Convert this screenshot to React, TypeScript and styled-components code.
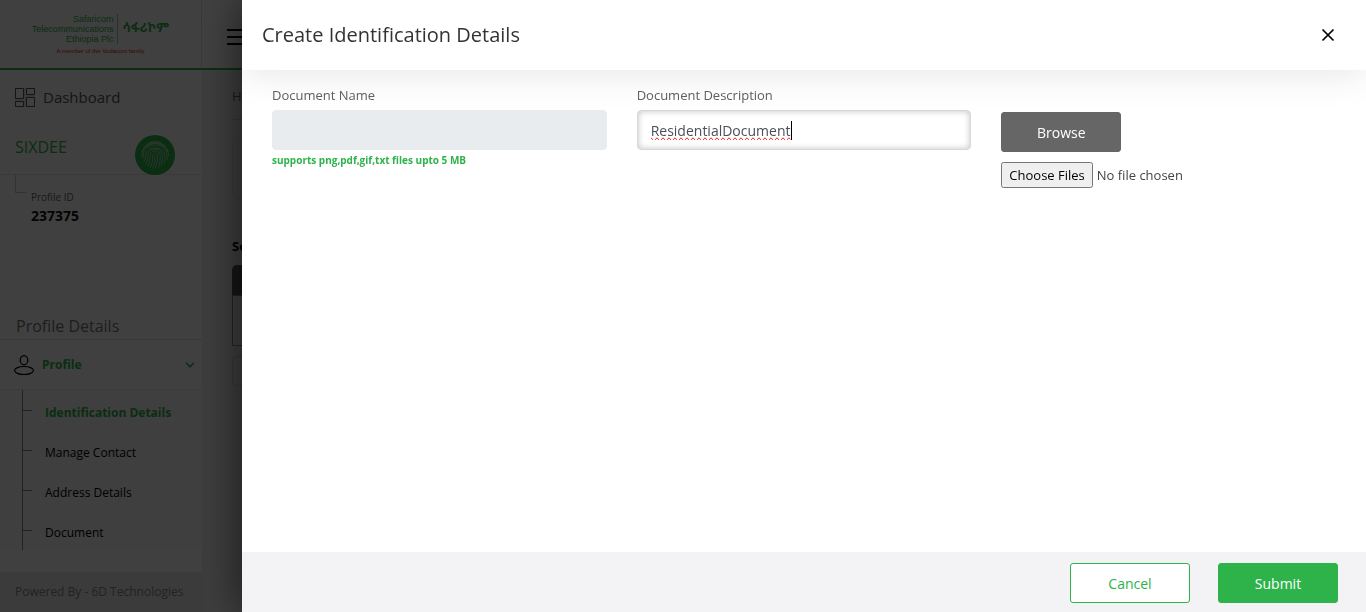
import React, { useState } from 'react';
import styled, { createGlobalStyle } from 'styled-components';

const green = '#2db34a';

const GlobalStyle = createGlobalStyle`
  *, *::before, *::after { box-sizing: border-box; }
  body {
    margin: 0;
    background: #f0f0f0;
    color: #212529;
    font-family: 'Open Sans', 'Noto Sans', sans-serif;
    font-size: 13px;
    line-height: 20px;
  }
  button, input { font: inherit; }
`;

const Page = styled.div`
  display: flex;
  flex-direction: column;
  min-height: 100vh;
`;

const TopBar = styled.header`
  display: flex;
  height: 70px;
  background: #fff;
  border-bottom: 2px solid ${green};
`;

const Brand = styled.a`
  display: flex;
  flex-direction: column;
  align-items: center;
  width: 202px;
  padding-top: 14px;
  border-right: 1px solid #e0e0e0;
  color: ${green};
  text-decoration: none;
`;

const BrandRow = styled.span`
  display: flex;
  align-items: stretch;
`;

const BrandName = styled.span`
  padding-right: 4px;
  border-right: 1px solid #8fd09d;
  font-family: 'Liberation Sans Narrow', 'Liberation Sans', sans-serif;
  font-size: 9px;
  line-height: 10px;
  text-align: right;
  white-space: pre-line;
`;

const BrandLocal = styled.span`
  padding: 4px 0 0 4px;
  font-family: 'Noto Sans Ethiopic', 'Noto Sans', sans-serif;
  font-size: 13px;
  font-weight: 700;
  line-height: 18px;
`;

const BrandNote = styled.span`
  color: #e02020;
  font-family: 'Liberation Sans Narrow', 'Liberation Sans', sans-serif;
  font-size: 6px;
  line-height: 14px;
`;

const MenuButton = styled.button`
  display: flex;
  flex-direction: column;
  gap: 5px;
  margin: 29px 0 0 25px;
  padding: 0;
  width: 24px;
  height: 16px;
  border: 0;
  background: none;
`;

const MenuBar = styled.span`
  height: 2px;
  width: 100%;
  background: #000;
`;

const Body = styled.div`
  display: flex;
  flex: 1;
`;

const Side = styled.aside`
  display: flex;
  flex-direction: column;
  width: 202px;
  background: #fff;
`;

const DashboardLink = styled.a`
  display: flex;
  align-items: center;
  gap: 8px;
  height: 54px;
  padding-left: 15px;
  color: #555;
  font-size: 15px;
  text-decoration: none;
`;

const Account = styled.div`
  display: flex;
  align-items: flex-start;
  justify-content: space-between;
  height: 51px;
  padding: 11px 27px 0 15px;
  border-bottom: 1px solid #e6e6e6;
`;

const AccountName = styled.span`
  color: ${green};
  font-size: 16px;
  line-height: 24px;
`;

const AccountInfo = styled.dl`
  display: flex;
  flex-direction: column;
  height: 139px;
  margin: 0;
  padding: 0 15px;
`;

const InfoLabel = styled.dt`
  display: flex;
  gap: 5px;
  height: 31px;
  color: #666;
  font-size: 10px;
  line-height: 44px;

  &::before {
    content: '';
    width: 11px;
    height: 18px;
    border-left: 1px solid #ccc;
    border-bottom: 1px solid #ccc;
  }
`;

const InfoValue = styled.dd`
  margin: 0 0 0 16px;
  color: #111;
  font-size: 14px;
  font-weight: 700;
  line-height: 20px;
`;

const SectionTitle = styled.h2`
  margin: 0;
  padding-left: 16px;
  height: 26px;
  border-bottom: 1px solid #e0e0e0;
  color: #777;
  font-size: 16px;
  font-weight: 400;
  line-height: 24px;
`;

const GroupButton = styled.button`
  display: flex;
  align-items: center;
  gap: 8px;
  height: 50px;
  padding: 0 7px 0 14px;
  border: 0;
  border-bottom: 1px solid #e6e6e6;
  background: #fff;
  color: ${green};
  font-size: 12px;
  font-weight: 700;
  text-align: left;
`;

const GroupLabel = styled.span`
  flex: 1;
`;

const SubMenu = styled.ul`
  margin: 0 0 22px;
  padding: 0 0 0 22px;
  background: #f9f9f9;
  list-style: none;
`;

const SubItem = styled.li`
  display: flex;
  align-items: center;
  gap: 13px;
  height: 40px;
  border-left: 1px solid #888;

  &::before {
    content: '';
    width: 9px;
    height: 1px;
    background: #888;
  }
`;

const SubLink = styled.a<{ $active?: boolean }>`
  padding-top: 6px;
  color: ${(p) => (p.$active ? green : '#000')};
  font-size: 12px;
  font-weight: ${(p) => (p.$active ? 700 : 400)};
  text-decoration: none;
`;

const SideFooter = styled.footer`
  flex: 1;
  padding: 10px 15px;
  background: #e9ecef;
  color: #888;
  font-size: 12px;
`;

const Content = styled.main`
  flex: 1;
  min-width: 0;
  padding-left: 30px;
`;

const Crumbs = styled.nav`
  height: 50px;
  padding-top: 16px;
  border-bottom: 1px solid #d0d0d0;
  color: #666;
`;

const Card = styled.div`
  height: 60px;
  margin-top: 20px;
  border: 1px solid #ddd;
  border-radius: 5px;
`;

const ContentTitle = styled.h3`
  margin: 36px 0 9px;
  color: #000;
  font-size: 13px;
  font-weight: 700;
  line-height: 20px;
`;

const TableHead = styled.div`
  height: 30px;
  border-radius: 5px 0 0;
  background: #555;
`;

const TableBody = styled.div`
  height: 51px;
  border: 1px solid #888;
`;

const Pager = styled.div`
  height: 30px;
  margin-top: 10px;
  border: 1px solid #ccc;
  border-radius: 4px;
`;

const Overlay = styled.div`
  position: fixed;
  inset: 0;
  background: rgba(0, 0, 0, 0.75);
`;

const Drawer = styled.section`
  position: fixed;
  inset: 0 0 0 242px;
  display: flex;
  flex-direction: column;
  background: #fff;
  box-shadow: 0 0 40px rgba(0, 0, 0, 0.6);
`;

const DrawerHeader = styled.header`
  display: flex;
  align-items: center;
  justify-content: space-between;
  height: 70px;
  padding: 0 28px 0 20px;
  background: #fff;
  box-shadow: 0 0 40px rgba(0, 0, 0, 0.12);
  clip-path: inset(0 0 -40px 0);
`;

const DrawerTitle = styled.h1`
  margin: 0;
  color: #333;
  font-size: 20px;
  font-weight: 400;
  line-height: 30px;
`;

const CloseButton = styled.button`
  display: flex;
  padding: 0;
  border: 0;
  background: none;
  color: #000;
`;

const Form = styled.form`
  display: flex;
  flex: 1;
  flex-direction: column;
`;

const Fields = styled.div`
  display: grid;
  flex: 1;
  grid-template-columns: repeat(3, 1fr);
  align-content: start;
  column-gap: 30px;
  padding: 15px 30px 0;
`;

const Field = styled.div`
  display: flex;
  flex-direction: column;
`;

const Label = styled.label`
  margin-bottom: 5px;
  color: #606060;
`;

const InputWrap = styled.div`
  position: relative;
  display: flex;
`;

const TextInput = styled.input`
  flex: 1;
  min-width: 0;
  height: 40px;
  padding: 0 13px;
  border: 1px solid #d8d8d8;
  border-radius: 4px;
  background: #fff;
  box-shadow: inset 0 0 6px rgba(0, 0, 0, 0.25);
  caret-color: transparent;
  color: #495057;
  font-size: 14px;
  outline: 0;
  text-decoration-line: spelling-error;

  &:disabled {
    border-color: #e9ecef;
    background: #e9ecef;
    box-shadow: none;
  }
`;

const Caret = styled.span`
  position: absolute;
  top: 11px;
  left: 154px;
  width: 1px;
  height: 19px;
  background: #000;
  pointer-events: none;
`;

const Hint = styled.small`
  color: ${green};
  font-size: 10px;
  font-weight: 700;
`;

const Upload = styled.div`
  display: flex;
  flex-direction: column;
  align-items: flex-start;
  gap: 10px;
  padding-top: 27px;
`;

const Button = styled.button<{ $kind: 'grey' | 'outline' | 'solid' }>`
  width: 120px;
  height: 40px;
  padding: 2px 0 0;
  border: 1px solid ${(p) => (p.$kind === 'grey' ? '#666' : green)};
  border-radius: 3px;
  background: ${(p) => ({ grey: '#666', outline: '#fff', solid: green })[p.$kind]};
  color: ${(p) => (p.$kind === 'outline' ? green : '#fff')};
  font-size: 14px;
`;

const FileInput = styled.input`
  color: #444;
  font-size: 13px;

  &::file-selector-button {
    height: 26px;
    font: inherit;
  }
`;

const Actions = styled.footer`
  display: flex;
  align-items: center;
  justify-content: flex-end;
  gap: 28px;
  height: 60px;
  padding: 2px 28px 0 0;
  background: #f3f3f5;
`;

const DashboardIcon = () => (
  <svg width="20" height="20" viewBox="0 0 20 20" fill="none" stroke="#555" aria-hidden="true">
    <path d="M.5 1.5h8v10h-8zM11.5 1.5h8v6h-8zM.5 14.5h8v5h-8zM11.5 10.5h8v9h-8z" />
    <path d="M10 1v19M0 13h9M11 9h9" stroke="#c8c8c8" />
  </svg>
);

const FingerprintIcon = () => (
  <svg width="40" height="40" viewBox="0 0 40 40" fill="none" aria-hidden="true">
    <circle cx="20" cy="20" r="20" fill={green} />
    <g stroke="#b9dfc1" strokeWidth=".8">
      <path d="M13 8.500a14 14 0 0 1 14 0M9 12.500a13.500 13.500 0 0 1 22 0M7 17a13.500 12 0 0 1 26 0M6.500 21c0-7 5-12.500 13.500-12.500s13.500 5.500 13.500 12.500M7 24c1.500-2 1.500-4 1.500-5.500a11.500 8.500 0 0 1 23 0c0 3 1 4 .5 6.500M8.500 27c2.500-3 1.500-6 2.500-9a9.500 7 0 0 1 18.500 1c.5 3 .5 5 0 9M10.500 29c3-4 1.500-8 3-11.500a7 5.500 0 0 1 13.500 1.500c.5 5 .3 8-.5 12M12.500 31c3.500-5 2-9 3-12.500a5 4.500 0 0 1 9.500 1c.3 5 0 9-1.500 13M15 32.500c3.500-5 2-9 3-13 1-2.500 4.500-2 4.500 0 0 5-.2 9-2.500 14M17.500 33.500c2.500-4 2.500-9 2.500-13.500" />
    </g>
  </svg>
);

const PersonIcon = () => (
  <svg width="20" height="20" viewBox="0 0 20 20" fill="none" stroke="#000" strokeWidth="1.2" aria-hidden="true">
    <ellipse cx="10" cy="5.200" rx="3.800" ry="4.600" />
    <ellipse cx="10" cy="15.500" rx="9.400" ry="4" />
  </svg>
);

const ChevronIcon = () => (
  <svg width="10" height="6" viewBox="0 0 10 6" fill="none" stroke={green} strokeWidth="1.6" aria-hidden="true">
    <path d="M1 .8l4 4 4-4" />
  </svg>
);

const CloseIcon = () => (
  <svg width="20" height="20" viewBox="0 0 20 20" fill="none" stroke="#000" strokeWidth="1.7" aria-hidden="true">
    <path d="M4.500 4.500l11 11M15.500 4.500l-11 11" />
  </svg>
);

const links = ['Identification Details', 'Manage Contact', 'Address Details', 'Document'];

export default function App() {
  const [description, setDescription] = useState('ResidentialDocument');

  return (
    <>
      <GlobalStyle />
      <Page>
        <TopBar>
          <Brand href="#">
            <BrandRow>
              <BrandName>{'Safaricom\nTelecommunications\nEthiopia Plc'}</BrandName>
              <BrandLocal lang="am">ሳፋሪኮም</BrandLocal>
            </BrandRow>
            <BrandNote>A member of the Vodacom family</BrandNote>
          </Brand>
          <MenuButton type="button" aria-label="Toggle menu">
            <MenuBar />
            <MenuBar />
            <MenuBar />
          </MenuButton>
        </TopBar>
        <Body>
          <Side>
            <DashboardLink href="#">
              <DashboardIcon />
              Dashboard
            </DashboardLink>
            <Account>
              <AccountName>SIXDEE</AccountName>
              <FingerprintIcon />
            </Account>
            <AccountInfo>
              <InfoLabel>Profile ID</InfoLabel>
              <InfoValue>237375</InfoValue>
            </AccountInfo>
            <SectionTitle>Profile Details</SectionTitle>
            <GroupButton type="button" aria-expanded="true">
              <PersonIcon />
              <GroupLabel>Profile</GroupLabel>
              <ChevronIcon />
            </GroupButton>
            <SubMenu>
              {links.map((text, i) => (
                <SubItem key={text}>
                  <SubLink href="#" $active={i === 0}>{text}</SubLink>
                </SubItem>
              ))}
            </SubMenu>
            <SideFooter>Powered By - 6D Technologies</SideFooter>
          </Side>
          <Content>
            <Crumbs>Ho</Crumbs>
            <Card />
            <ContentTitle>Se</ContentTitle>
            <TableHead />
            <TableBody />
            <Pager />
          </Content>
        </Body>
      </Page>
      <Overlay />
      <Drawer role="dialog" aria-labelledby="drawer-title">
        <DrawerHeader>
          <DrawerTitle id="drawer-title">Create Identification Details</DrawerTitle>
          <CloseButton type="button" aria-label="Close">
            <CloseIcon />
          </CloseButton>
        </DrawerHeader>
        <Form onSubmit={(e) => e.preventDefault()}>
          <Fields>
            <Field>
              <Label htmlFor="doc-name">Document Name</Label>
              <InputWrap>
                <TextInput id="doc-name" disabled />
              </InputWrap>
              <Hint>supports png,pdf,gif,txt files upto 5 MB</Hint>
            </Field>
            <Field>
              <Label htmlFor="doc-description">Document Description</Label>
              <InputWrap>
                <TextInput
                  id="doc-description"
                  value={description}
                  onChange={(e) => setDescription(e.target.value)}
                />
                <Caret />
              </InputWrap>
            </Field>
            <Upload>
              <Button type="button" $kind="grey">Browse</Button>
              <FileInput type="file" multiple aria-label="Files" />
            </Upload>
          </Fields>
          <Actions>
            <Button type="button" $kind="outline">Cancel</Button>
            <Button type="submit" $kind="solid">Submit</Button>
          </Actions>
        </Form>
      </Drawer>
    </>
  );
}
